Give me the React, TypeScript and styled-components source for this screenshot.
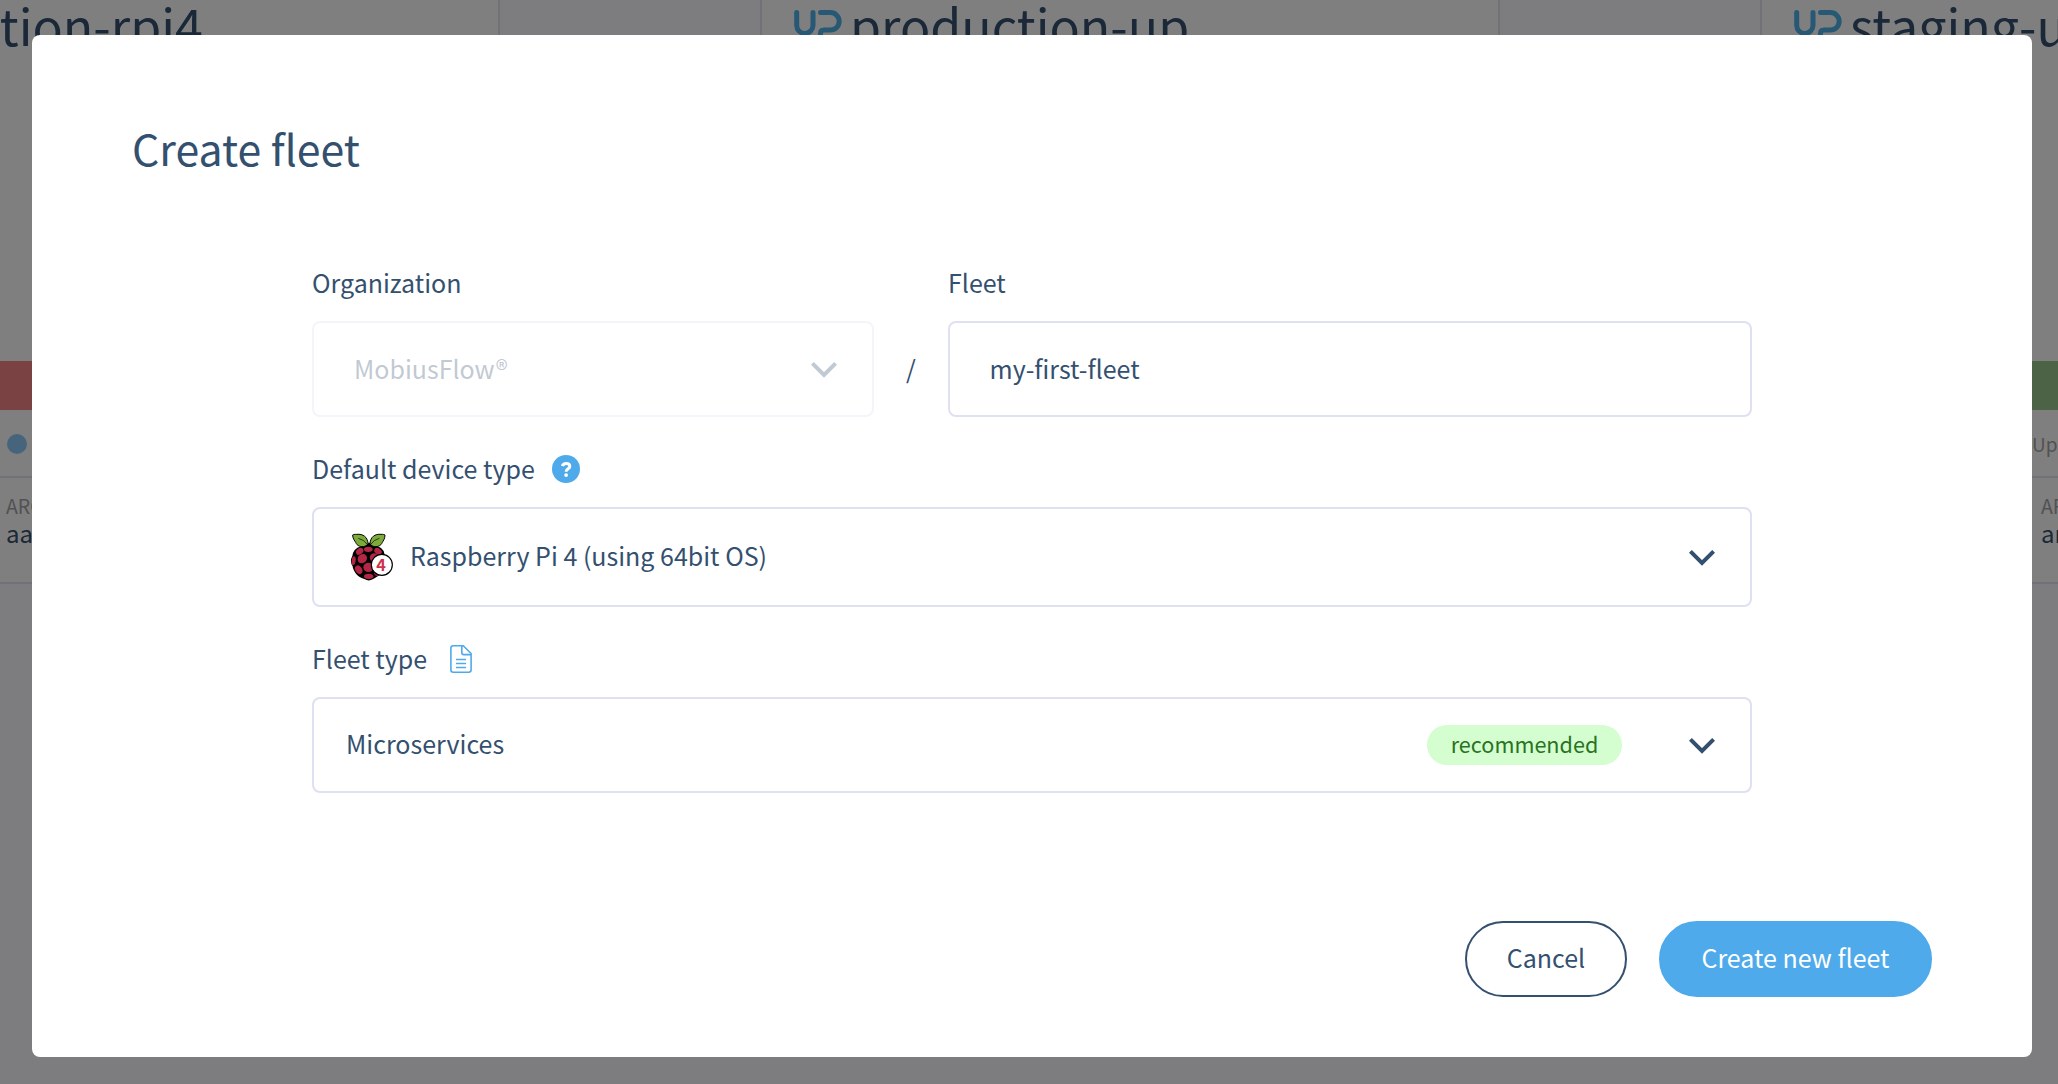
import React from 'react';
import styled, { createGlobalStyle } from 'styled-components';

const ink = '#34506f';
const blue = '#4eaaea';
const line = '#dde1f1';

const GlobalStyle = createGlobalStyle`
  *, *::before, *::after { box-sizing: border-box; }
  html, body { margin: 0; padding: 0; }
  body {
    overflow: hidden;
    color: ${ink};
    font-family: 'Noto Sans CJK SC', 'Noto Sans', sans-serif;
    font-size: 25px;
    line-height: 42px;
  }
`;

const Screen = styled.div`
  position: relative;
  width: 2058px;
  height: 1084px;
  overflow: hidden;
  background: #fafbfe;
`;

const CardRow = styled.div`
  display: flex;
  gap: 260px;
  margin-left: -240px;
  width: 2740px;
`;

const FleetCard = styled.section`
  width: 740px;
  height: 584px;
  flex: none;
  background: #fff;
  border: 2px solid #e3e3ef;
  border-top: 0;
`;

const CardTitle = styled.div<{ $gap: number }>`
  display: flex;
  align-items: flex-start;
  gap: ${(p) => p.$gap}px;
  height: 361px;
  padding-left: 32px;
  white-space: nowrap;
`;

const CardName = styled.span`
  font-size: 50.1px;
  line-height: 49px;
  color: ${ink};
`;

const Logo = styled.svg`
  flex: none;
  margin-top: 9px;
`;

const StatusBar = styled.div<{ $color: string }>`
  height: 49px;
  background: ${(p) => p.$color};
`;

const CardMeta = styled.div<{ $left: number }>`
  display: flex;
  align-items: center;
  height: 68px;
  padding: 2px 0 0 ${(p) => p.$left}px;
  border-bottom: 2px solid #e3e3ef;
  color: #a3a4a6;
  font-size: 19px;
`;

const Dot = styled.span`
  width: 20px;
  height: 20px;
  border-radius: 50%;
  background: #8ccbfa;
`;

const CardSpec = styled.div<{ $left: number }>`
  display: flex;
  flex-direction: column;
  padding: 14px 0 0 ${(p) => p.$left}px;
`;

const SpecLabel = styled.span`
  color: #a3a4a6;
  font-size: 19.5px;
  line-height: 28px;
`;

const SpecValue = styled.span`
  color: ${ink};
  font-size: 24px;
  line-height: 26px;
`;

const Overlay = styled.div`
  position: absolute;
  inset: 0;
  padding: 35px 26px 27px 32px;
  background: rgba(0, 0, 0, 0.5);
`;

const Modal = styled.div`
  display: flex;
  flex-direction: column;
  width: 2000px;
  height: 1022px;
  padding: 82px 100px 60px;
  border-radius: 8px;
  background: #fff;
`;

const Title = styled.h1`
  margin: 0 0 84px;
  font-size: 42.8px;
  font-weight: 400;
  line-height: 60px;
`;

const Form = styled.form`
  display: flex;
  flex-direction: column;
  gap: 30px;
  width: 1440px;
  margin: 0 180px;
`;

const SplitRow = styled.div`
  display: flex;
  align-items: flex-end;
`;

const Field = styled.div<{ $width: number }>`
  display: flex;
  flex-direction: column;
  gap: 18px;
  width: ${(p) => p.$width}px;
`;

const Label = styled.label<{ $gap?: number }>`
  display: flex;
  align-items: center;
  gap: ${(p) => p.$gap ?? 0}px;
  height: 42px;

  svg {
    margin-top: 1px;
  }
`;

const Slash = styled.span`
  width: 74px;
  height: 96px;
  line-height: 94px;
  text-align: center;
`;

const Control = styled.div<{ $height?: number; $left: number; $disabled?: boolean }>`
  display: flex;
  align-items: center;
  height: ${(p) => p.$height ?? 96}px;
  padding: 0 35px 0 ${(p) => p.$left}px;
  border: 2px solid ${line};
  border-radius: 8px;
  opacity: ${(p) => (p.$disabled ? 0.3 : 1)};
`;

const Value = styled.span<{ $lift?: number }>`
  flex: 1;
  padding-bottom: ${(p) => p.$lift ?? 3}px;
  white-space: nowrap;
`;

const Tag = styled.span`
  height: 40px;
  width: 195px;
  margin-right: 67px;
  border-radius: 20px;
  background: #d4fdd0;
  color: #297321;
  font-size: 21.6px;
  line-height: 37px;
  text-align: center;
`;

const DeviceIcon = styled.svg`
  flex: none;
  margin-right: 17px;
`;

const Arrow = styled.svg`
  flex: none;
  margin-top: 1px;
`;

const Actions = styled.div`
  display: flex;
  justify-content: flex-end;
  gap: 32px;
  margin-top: 128px;
`;

const Button = styled.button<{ $primary?: boolean; $width: number }>`
  width: ${(p) => p.$width}px;
  height: 76px;
  padding: 0 0 5px;
  border: 2px solid ${(p) => (p.$primary ? blue : ink)};
  border-radius: 38px;
  background: ${(p) => (p.$primary ? blue : '#fff')};
  color: ${(p) => (p.$primary ? '#fff' : ink)};
  font: inherit;
`;

const Chevron = () => (
  <Arrow width="26" height="16" viewBox="0 0 26 16" fill="none">
    <path d="M1.4 1.4L13 13L24.6 1.4" stroke={ink} strokeWidth="4" />
  </Arrow>
);

const UpLogo = () => (
  <Logo width="48" height="38" viewBox="0 0 48 38" fill="none" stroke="#4fb0e8" strokeWidth="5" strokeLinecap="round">
    <path d="M2.7 3.5V16.5A8.2 8.2 0 0 0 10.9 24.5A8.2 8.2 0 0 0 19 16.5V3.5" />
    <path d="M26.5 3.6H36.5A8.7 8.7 0 0 1 36.5 21H30Q26.5 21 26.5 24.5V34" />
  </Logo>
);

const HelpIcon = () => (
  <svg width="28" height="28" viewBox="0 0 28 28" fill="none">
    <circle cx="14" cy="14" r="14" fill={blue} />
    <path
      d="M10.3 11.1C10.9 9.4 12.2 8.5 14.1 8.5C16.3 8.5 17.8 9.7 17.8 11.4C17.8 14 14.1 13.7 14.1 16.8"
      stroke="#fff"
      strokeWidth="3"
    />
    <circle cx="14.1" cy="20.1" r="1.9" fill="#fff" />
  </svg>
);

const DocIcon = () => (
  <svg width="22" height="28" viewBox="0 0 22 28" fill="none" stroke={blue} strokeWidth="1.6">
    <path d="M3.3 .8H13.2L21.1 8.5V24.8Q21.1 27.2 18.7 27.2H3.3Q.9 27.2 .9 24.8V3.1Q.9 .8 3.3 .8Z" />
    <path d="M11.8 .9V7.5Q11.8 9.6 13.9 9.6H21" />
    <path d="M6 14.5H16M6 18.5H16M6 22.5H16" />
  </svg>
);

const drupelets = [
  [85, 88, 13, 8, 0],
  [59, 94, 12, 9, -35],
  [114, 94, 12, 9, 35],
  [67, 116, 15, 13, -40],
  [103, 113, 14, 13, 40],
  [41, 122, 6, 13, 8],
  [56, 149, 10, 14, -30],
  [85, 142, 15, 14, 0],
  [112, 158, 9, 10, 40],
  [86, 169, 14, 8, 0],
];

const RaspberryIcon = () => (
  <DeviceIcon width="43" height="48" viewBox="30 39 129 144">
    <path
      d="M86 74L98 76Q130 78 134 104Q143 118 138 132Q136 156 118 166Q104 175 98 178Q86 185 73 177Q55 171 48 161Q38 148 38 139Q28 124 37 108Q40 86 62 79Z"
      fill="#000"
    />
    <g stroke="#000" strokeWidth="3" strokeLinejoin="round" fill="#7cab3c">
      <path d="M84 71C83 51 69 41 50 43C44 43 40 43 38 45C38 57 45 63 47 67C51 78 63 82 74 79Q82 77 84 71Z" />
      <path d="M90 71C91 51 105 41 123 43C129 43 133 43 135 45C135 57 129 63 127 67C123 78 111 82 100 79Q92 77 90 71Z" />
    </g>
    <path d="M55 55Q72 59 82 73M118 55Q102 59 92 73" stroke="#000" strokeWidth="2" fill="none" />
    <path d="M87 67L96 77L87 82L78 77Z" fill="#000" />
    {drupelets.map(([x, y, rx, ry, a]) => (
      <ellipse key={`${x}-${y}`} cx={x} cy={y} rx={rx} ry={ry} transform={`rotate(${a} ${x} ${y})`} fill="#b32645" />
    ))}
    <circle cx="125.5" cy="134.5" r="31.5" fill="#fff" stroke="#000" strokeWidth="3.5" />
    <text x="123" y="152" fontSize="49" fontWeight="700" textAnchor="middle" fill="#d03050">
      4
    </text>
  </DeviceIcon>
);

export default function App() {
  return (
    <Screen>
      <GlobalStyle />
      <CardRow>
        <FleetCard>
          <CardTitle $gap={0}>
            <Logo width="39" height="38" />
            <CardName>production-rpi4</CardName>
          </CardTitle>
          <StatusBar $color="#f58484" />
          <CardMeta $left={245}>
            <Dot />
          </CardMeta>
          <CardSpec $left={244}>
            <SpecLabel>ARCH</SpecLabel>
            <SpecValue>aarch64</SpecValue>
          </CardSpec>
        </FleetCard>
        <FleetCard>
          <CardTitle $gap={8}>
            <UpLogo />
            <CardName>production-up</CardName>
          </CardTitle>
        </FleetCard>
        <FleetCard>
          <CardTitle $gap={8}>
            <UpLogo />
            <CardName>staging-up</CardName>
          </CardTitle>
          <StatusBar $color="#98c98a" />
          <CardMeta $left={270}>Updates</CardMeta>
          <CardSpec $left={279}>
            <SpecLabel>ARCH</SpecLabel>
            <SpecValue>armv7hf</SpecValue>
          </CardSpec>
        </FleetCard>
      </CardRow>
      <Overlay>
        <Modal>
          <Title>Create fleet</Title>
          <Form>
            <SplitRow>
              <Field $width={562}>
                <Label>Organization</Label>
                <Control $left={40} $disabled>
                  <Value>MobiusFlow®</Value>
                  <Chevron />
                </Control>
              </Field>
              <Slash>/</Slash>
              <Field $width={804}>
                <Label>Fleet</Label>
                <Control $left={39.5}>
                  <Value>my-first-fleet</Value>
                </Control>
              </Field>
            </SplitRow>
            <Field $width={1440}>
              <Label $gap={17}>
                Default device type
                <HelpIcon />
              </Label>
              <Control $height={100} $left={36}>
                <RaspberryIcon />
                <Value $lift={5}>Raspberry Pi 4 (using 64bit OS)</Value>
                <Chevron />
              </Control>
            </Field>
            <Field $width={1440}>
              <Label $gap={23}>
                Fleet type
                <DocIcon />
              </Label>
              <Control $left={32}>
                <Value $lift={5}>Microservices</Value>
                <Tag>recommended</Tag>
                <Chevron />
              </Control>
            </Field>
          </Form>
          <Actions>
            <Button $width={162}>Cancel</Button>
            <Button $primary $width={273}>
              Create new fleet
            </Button>
          </Actions>
        </Modal>
      </Overlay>
    </Screen>
  );
}
